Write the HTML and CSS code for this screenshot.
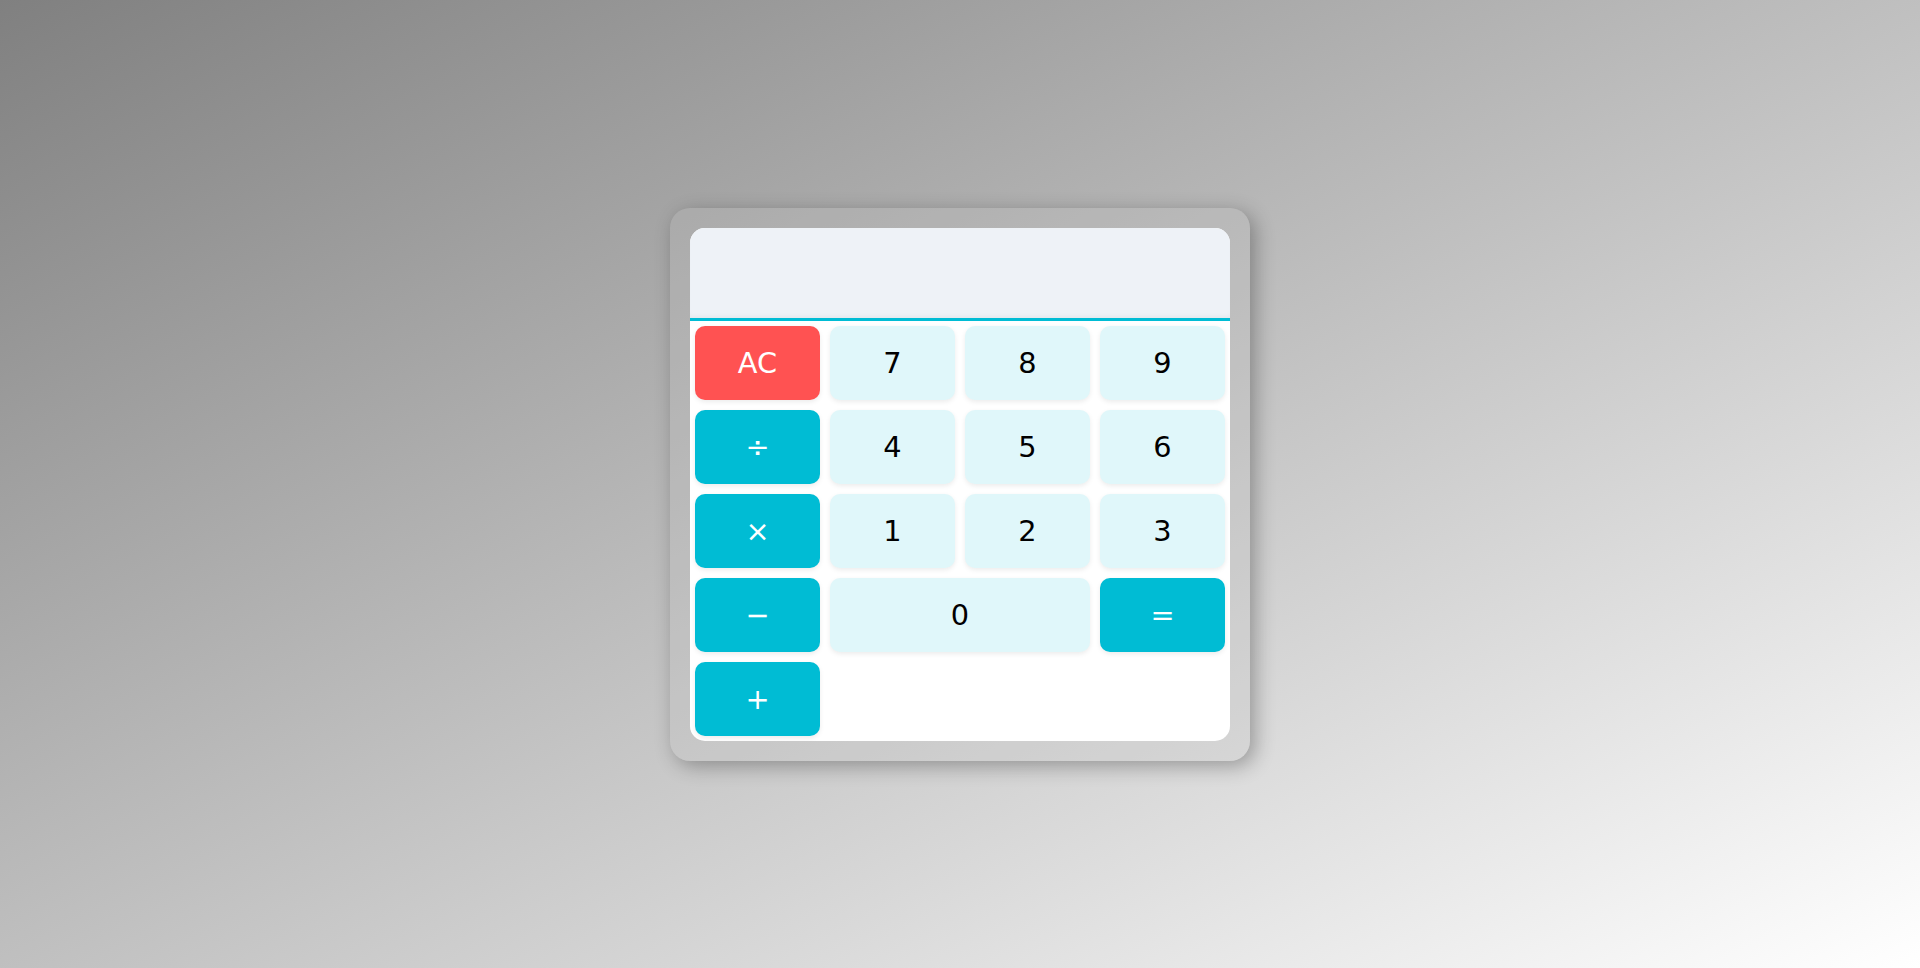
FILE: index.html
```html
<!DOCTYPE html>
<html lang="en">
<head>
<meta charset="utf-8">
<title>Calculator</title>
<link rel="stylesheet" href="styles.css">
</head>
<body>
  <div class="calculator">
    <div class="panel">
      <div class="display"></div>
      <div class="keys">
        <button class="key clear">AC</button>
        <button class="key num">7</button>
        <button class="key num">8</button>
        <button class="key num">9</button>
        <button class="key op">÷</button>
        <button class="key num">4</button>
        <button class="key num">5</button>
        <button class="key num">6</button>
        <button class="key op">×</button>
        <button class="key num">1</button>
        <button class="key num">2</button>
        <button class="key num">3</button>
        <button class="key op">−</button>
        <button class="key num zero">0</button>
        <button class="key op">=</button>
        <button class="key op">+</button>
      </div>
    </div>
  </div>
</body>
</html>
```
FILE: styles.css
```css
html, body {
  margin: 0;
  padding: 0;
}

body {
  min-height: 100vh;
  display: flex;
  align-items: center;
  justify-content: center;
  background: linear-gradient(to bottom right, #808080, #ffffff);
  font-family: "DejaVu Sans", sans-serif;
}

.calculator {
  width: 540px;
  padding: 20px;
  border-radius: 20px;
  background: rgba(195, 195, 195, 0.22);
  box-shadow: 5px 5px 20px rgba(0, 0, 0, 0.3);
}

.panel {
  background: #ffffff;
  border-radius: 15px;
  overflow: hidden;
}

.display {
  height: 90px;
  background: #eef2f7;
  border-bottom: 3px solid #00bcd4;
  box-shadow: inset 0 -4px 6px -4px rgba(0, 0, 0, 0.08);
}

.keys {
  display: grid;
  grid-template-columns: repeat(4, 1fr);
  grid-auto-rows: 74px;
  gap: 10px;
  padding: 5px;
}

.key {
  border: none;
  border-radius: 10px;
  font-family: "DejaVu Sans", sans-serif;
  font-size: 28.8px;
  padding: 0;
  cursor: pointer;
  box-shadow: 0 2px 5px rgba(0, 0, 0, 0.08);
}

.num {
  background: #e0f7fa;
  color: #000000;
}

.op {
  background: #00bcd4;
  color: #ffffff;
}

.clear {
  background: #ff5252;
  color: #ffffff;
}

.zero {
  grid-column: span 2;
}
```
